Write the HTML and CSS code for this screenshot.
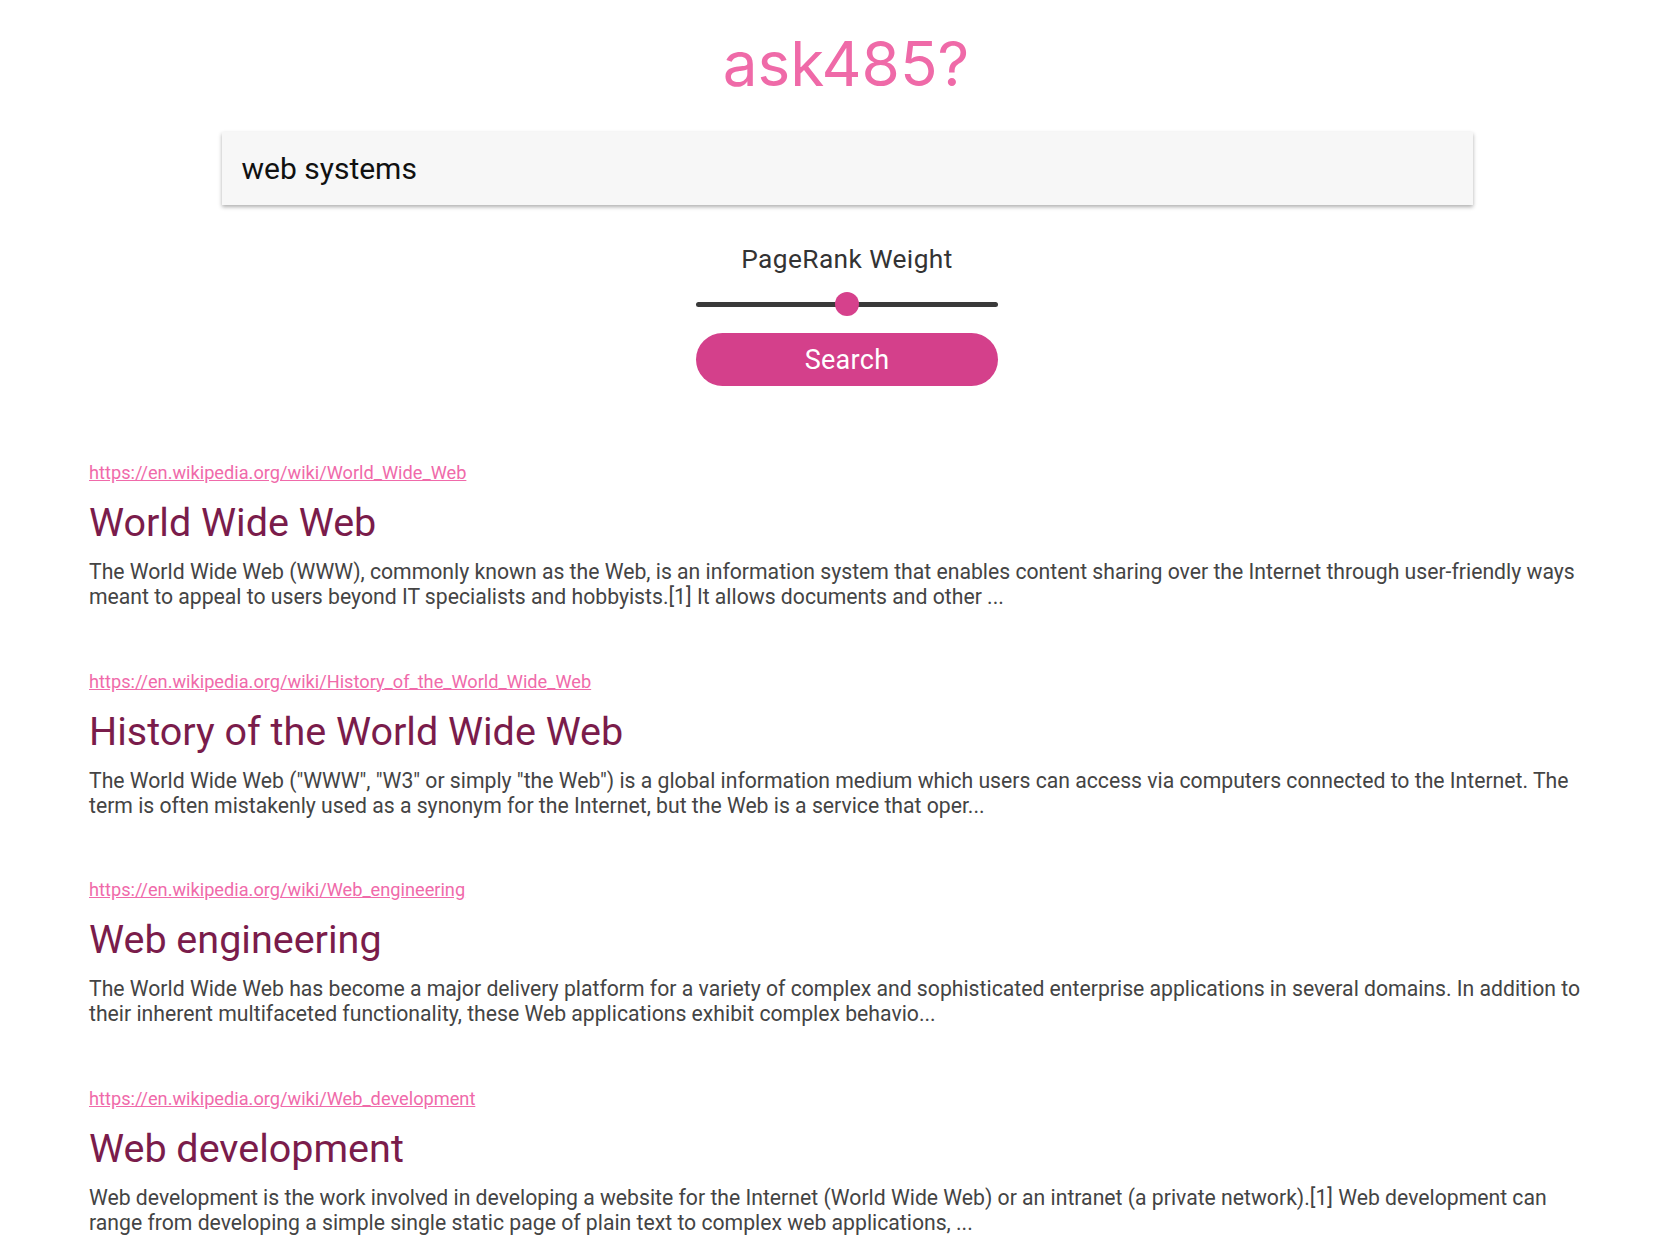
FILE: index.html
```html
<!DOCTYPE html>
<html lang="en">
<head>
<meta charset="utf-8">
<title>ask485?</title>
<link rel="stylesheet" href="styles.css">
</head>
<body>
<div class="page">
  <header class="hero">
    <h1 class="logo">ask485?</h1>
    <div class="search-box">web systems</div>
    <div class="weight-label">PageRank Weight</div>
    <div class="slider">
      <div class="slider-track"></div>
      <div class="slider-thumb" style="left: 50%"></div>
    </div>
    <button class="search-btn" type="button">Search</button>
  </header>

  <main class="results">
    <article class="result">
      <a class="result-url" href="#">https://en.wikipedia.org/wiki/World_Wide_Web</a>
      <h2 class="result-title">World Wide Web</h2>
      <p class="result-snippet">The World Wide Web (WWW), commonly known as the Web, is an information system that enables content sharing over the Internet through user-friendly ways meant to appeal to users beyond IT specialists and hobbyists.[1] It allows documents and other ...</p>
    </article>
    <article class="result">
      <a class="result-url" href="#">https://en.wikipedia.org/wiki/History_of_the_World_Wide_Web</a>
      <h2 class="result-title">History of the World Wide Web</h2>
      <p class="result-snippet">The World Wide Web ("WWW", "W3" or simply "the Web") is a global information medium which users can access via computers connected to the Internet. The term is often mistakenly used as a synonym for the Internet, but the Web is a service that oper...</p>
    </article>
    <article class="result">
      <a class="result-url" href="#">https://en.wikipedia.org/wiki/Web_engineering</a>
      <h2 class="result-title">Web engineering</h2>
      <p class="result-snippet">The World Wide Web has become a major delivery platform for a variety of complex and sophisticated enterprise applications in several domains. In addition to their inherent multifaceted functionality, these Web applications exhibit complex behavio...</p>
    </article>
    <article class="result">
      <a class="result-url" href="#">https://en.wikipedia.org/wiki/Web_development</a>
      <h2 class="result-title">Web development</h2>
      <p class="result-snippet">Web development is the work involved in developing a website for the Internet (World Wide Web) or an intranet (a private network).[1] Web development can range from developing a simple single static page of plain text to complex web applications, ...</p>
    </article>
  </main>
</div>
</body>
</html>
```

FILE: styles.css
```css
* {
  box-sizing: border-box;
}

html, body {
  margin: 0;
  padding: 0;
  background: #ffffff;
}

body {
  font-family: Roboto, "Liberation Sans", Arial, sans-serif;
  color: #333333;
}

.page {
  padding-left: 18px;
}

.hero {
  display: flex;
  flex-direction: column;
  align-items: center;
}

.logo {
  margin: 0;
  padding-top: 27px;
  padding-right: 2px;
  font-family: Inter, "Noto Sans", sans-serif;
  font-weight: 400;
  font-size: 62px;
  line-height: 74px;
  color: #ef6aa8;
  letter-spacing: 0;
}

.search-box {
  margin-top: 31px;
  width: 1251px;
  height: 73px;
  background: #f7f7f7;
  box-shadow: 0 2px 4px rgba(0, 0, 0, 0.32);
  padding-left: 20px;
  display: flex;
  align-items: center;
  font-size: 30px;
  color: #111111;
}

.weight-label {
  margin-top: 39px;
  font-size: 26.3px;
  line-height: 30px;
  letter-spacing: 0.4px;
  color: #333333;
}

.slider {
  position: relative;
  margin-top: 18px;
  width: 302px;
  height: 24px;
  display: flex;
  align-items: center;
}

.slider-track {
  width: 100%;
  height: 5px;
  border-radius: 3px;
  background: #3a3a3a;
}

.slider-thumb {
  position: absolute;
  top: 0;
  width: 24px;
  height: 24px;
  margin-left: -12px;
  border-radius: 50%;
  background: #d6418c;
}

.search-btn {
  margin-top: 17px;
  width: 302px;
  height: 53px;
  border: none;
  border-radius: 27px;
  background: #d4408b;
  color: #ffffff;
  font-family: Roboto, "Liberation Sans", Arial, sans-serif;
  font-size: 27px;
  letter-spacing: 0.3px;
  padding: 0;
  cursor: pointer;
}

.results {
  margin-top: 77px;
  margin-left: 71px;
  width: 1500px;
}

.result {
  margin-bottom: 62.5px;
}

.result-url {
  display: block;
  font-size: 18.2px;
  line-height: 20px;
  color: #f06aaa;
  text-decoration: underline;
}

.result-title {
  margin: 17px 0 0;
  font-size: 39.5px;
  font-weight: 400;
  line-height: 46px;
  color: #7a1c4b;
}

.result-snippet {
  margin: 13px 0 0;
  font-size: 21.2px;
  line-height: 25px;
  color: #444444;
}
```
